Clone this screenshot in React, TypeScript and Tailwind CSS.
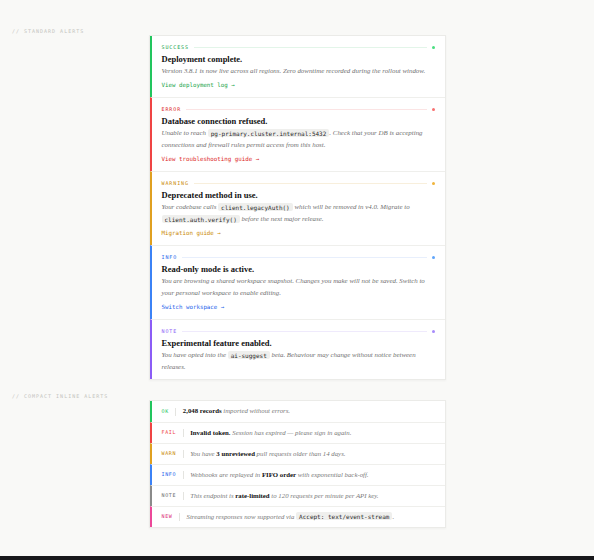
import React from 'react';

const serif = "font-['Liberation_Serif','Times_New_Roman',serif]";
const mono = "font-['DejaVu_Sans_Mono','Liberation_Mono',monospace]";

const Code = ({ children }: { children: React.ReactNode }) => (
  <code
    className={`${mono} not-italic rounded-[2px] bg-[#efefed] px-[3px] py-[0.5px] text-[6px] text-[#2a2a2a]`}
  >
    {children}
  </code>
);

type Alert = {
  label: string;
  bar: string;
  text: string;
  line: string;
  dot: string;
  title: string;
  body: React.ReactNode;
  link?: string;
};

const alerts: Alert[] = [
  {
    label: 'Success',
    bar: 'border-l-[#22c55e]',
    text: 'text-[#16a34a]',
    line: 'bg-[#e3f5e9]',
    dot: 'bg-[#4ade80]',
    title: 'Deployment complete.',
    body: 'Version 3.8.1 is now live across all regions. Zero downtime recorded during the rollout window.',
    link: 'View deployment log →',
  },
  {
    label: 'Error',
    bar: 'border-l-[#ef4444]',
    text: 'text-[#dc2626]',
    line: 'bg-[#fbe4e4]',
    dot: 'bg-[#f87171]',
    title: 'Database connection refused.',
    body: (
      <>
        Unable to reach <Code>pg-primary.cluster.internal:5432</Code>. Check that your DB is accepting
        connections and firewall rules permit access from this host.
      </>
    ),
    link: 'View troubleshooting guide →',
  },
  {
    label: 'Warning',
    bar: 'border-l-[#e0a020]',
    text: 'text-[#ca8a04]',
    line: 'bg-[#f8efdc]',
    dot: 'bg-[#f0b43c]',
    title: 'Deprecated method in use.',
    body: (
      <>
        Your codebase calls <Code>client.legacyAuth()</Code> which will be removed in v4.0. Migrate to{' '}
        <Code>client.auth.verify()</Code> before the next major release.
      </>
    ),
    link: 'Migration guide →',
  },
  {
    label: 'Info',
    bar: 'border-l-[#3b82f6]',
    text: 'text-[#2563eb]',
    line: 'bg-[#e8effc]',
    dot: 'bg-[#60a5fa]',
    title: 'Read-only mode is active.',
    body: 'You are browsing a shared workspace snapshot. Changes you make will not be saved. Switch to your personal workspace to enable editing.',
    link: 'Switch workspace →',
  },
  {
    label: 'Note',
    bar: 'border-l-[#8b5cf6]',
    text: 'text-[#8b5cf6]',
    line: 'bg-[#efeafc]',
    dot: 'bg-[#a78bfa]',
    title: 'Experimental feature enabled.',
    body: (
      <>
        You have opted into the <Code>ai-suggest</Code> beta. Behaviour may change without notice between
        releases.
      </>
    ),
  },
];

type Inline = { label: string; bar: string; text: string; body: React.ReactNode };

const B = ({ children }: { children: React.ReactNode }) => (
  <b className="font-bold not-italic text-[#111]">{children}</b>
);

const inline: Inline[] = [
  {
    label: 'OK',
    bar: 'border-l-[#22c55e]',
    text: 'text-[#22c55e]',
    body: (
      <>
        <B>2,048 records</B> imported without errors.
      </>
    ),
  },
  {
    label: 'Fail',
    bar: 'border-l-[#ef4444]',
    text: 'text-[#ef4444]',
    body: (
      <>
        <B>Invalid token.</B> Session has expired — please sign in again.
      </>
    ),
  },
  {
    label: 'Warn',
    bar: 'border-l-[#e0a020]',
    text: 'text-[#ca8a04]',
    body: (
      <>
        You have <B>3 unreviewed</B> pull requests older than 14 days.
      </>
    ),
  },
  {
    label: 'Info',
    bar: 'border-l-[#3b82f6]',
    text: 'text-[#2563eb]',
    body: (
      <>
        Webhooks are replayed in <B>FIFO order</B> with exponential back-off.
      </>
    ),
  },
  {
    label: 'Note',
    bar: 'border-l-[#8a8a8a]',
    text: 'text-[#6b6b6b]',
    body: (
      <>
        This endpoint is <B>rate-limited</B> to 120 requests per minute per API key.
      </>
    ),
  },
  {
    label: 'New',
    bar: 'border-l-[#ec4899]',
    text: 'text-[#db2777]',
    body: (
      <>
        Streaming responses now supported via <Code>Accept: text/event-stream</Code>.
      </>
    ),
  },
];

const SectionLabel = ({ children }: { children: React.ReactNode }) => (
  <div className={`${mono} text-[5px] leading-[7px] tracking-[1px] uppercase text-[#c4c4c0]`}>
    {children}
  </div>
);

export default function App() {
  return (
    <div className="min-h-screen bg-[#18181b]">
      <div className="bg-[#f9f9f7] px-[12px] pt-[28px] pb-[28px]">
        <SectionLabel>// Standard alerts</SectionLabel>
        <div className="mx-auto w-[297px] border border-[#ebebe8] bg-white shadow-[0_1px_2px_rgba(0,0,0,0.04)]">
          {alerts.map((a, i) => (
            <div
              key={a.label}
              className={`border-l-2 ${a.bar} pl-[10px] pr-[10px] pt-[8px] ${a.link ? 'pb-[7px]' : 'pb-[6px]'} ${
                i > 0 ? 'border-t border-t-[#efefec]' : ''
              }`}
            >
              <div className="flex items-center gap-[5px]">
                <span className={`${mono} ${a.text} text-[5px] leading-[7px] tracking-[0.9px] uppercase`}>
                  {a.label}
                </span>
                <span className={`h-px flex-1 ${a.line}`} />
                <span className={`h-[2.5px] w-[2.5px] rounded-full ${a.dot}`} />
              </div>
              <h3 className={`${serif} mt-[2px] text-[8.5px] leading-[12px] font-bold text-[#111]`}>{a.title}</h3>
              <p className={`${serif} text-[6.9px] leading-[12px] italic text-[#707070]`}>{a.body}</p>
              {a.link && (
                <div className={`${mono} ${a.text} mt-[3px] text-[5.8px] leading-[10px]`}>{a.link}</div>
              )}
            </div>
          ))}
        </div>

        <div className="mt-[13px]">
          <SectionLabel>// Compact inline alerts</SectionLabel>
        </div>
        <div className="mx-auto w-[297px] border border-[#ebebe8] bg-white shadow-[0_1px_2px_rgba(0,0,0,0.04)]">
          {inline.map((r, i) => (
            <div
              key={r.label}
              className={`flex h-[21px] items-center gap-[6.5px] border-l-2 ${r.bar} pl-[10px] pr-[10px] ${
                i > 0 ? 'border-t border-t-[#efefec]' : ''
              }`}
            >
              <span className={`${mono} ${r.text} text-[5px] tracking-[0.65px] uppercase`}>{r.label}</span>
              <span className="h-[8px] w-px bg-[#e4e4e0]" />
              <span className={`${serif} text-[6.8px] italic text-[#7a7a7a]`}>{r.body}</span>
            </div>
          ))}
        </div>
      </div>
    </div>
  );
}
